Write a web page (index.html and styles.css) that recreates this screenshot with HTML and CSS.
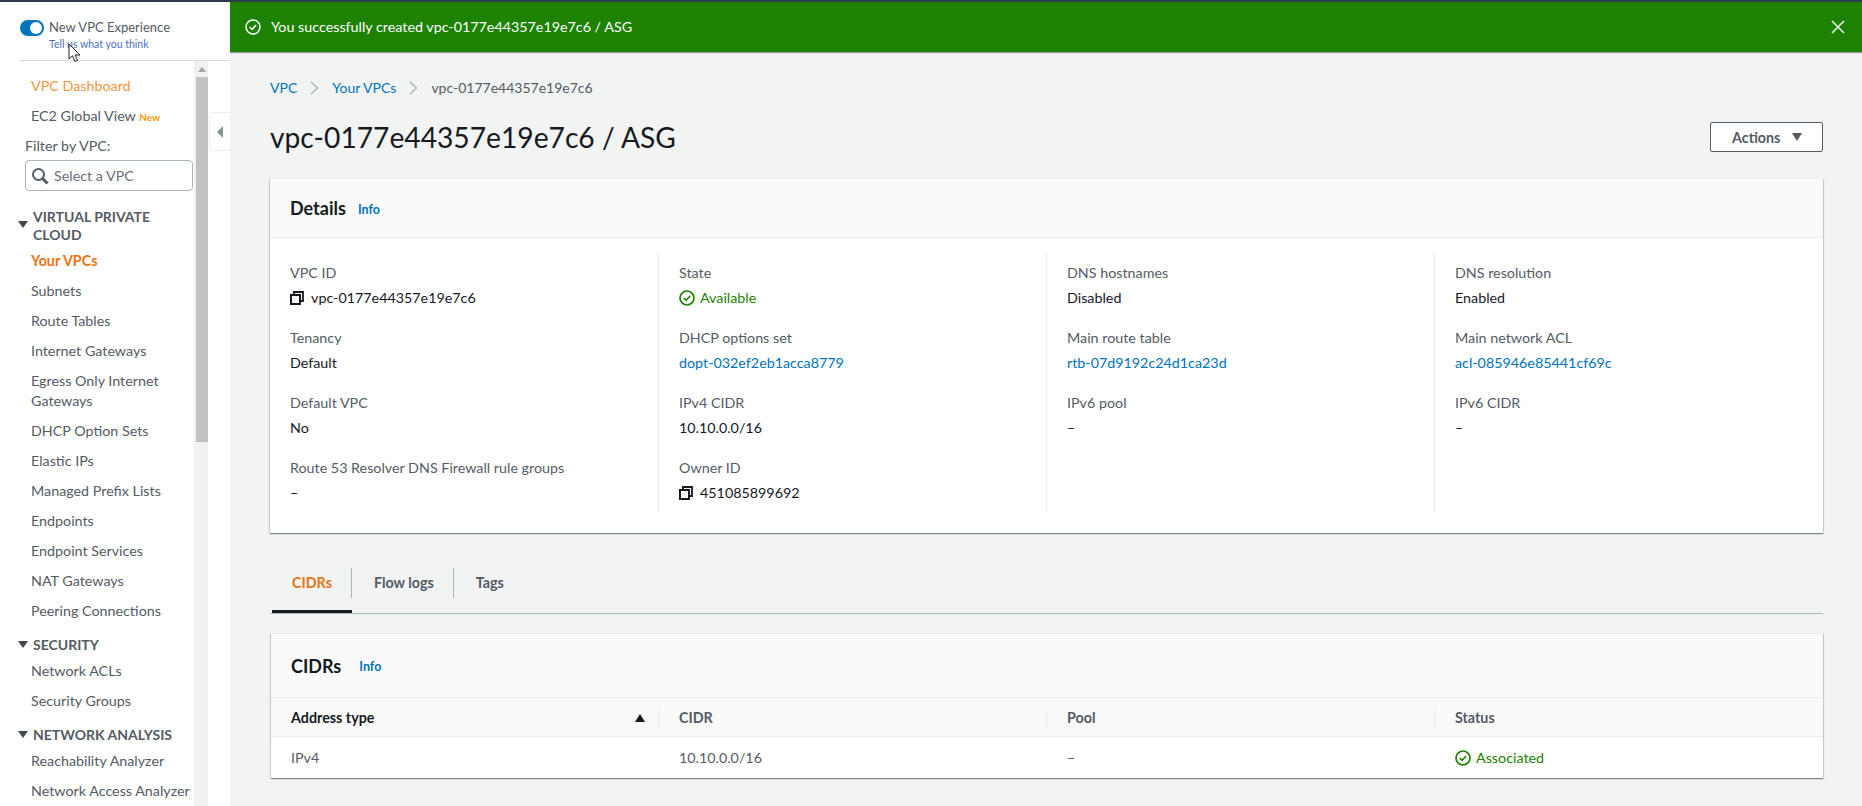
FILE: index.html
```html
<!DOCTYPE html>
<html lang="en">
<head>
  <meta charset="UTF-8">
  <title>VPC Console</title>
  <link rel="stylesheet" href="styles.css">
</head>
<body>

<svg class="cursor" width="14" height="20" viewBox="0 0 14 20">
  <path d="M1 1v15l3.5-3.2L7 18.5l2.6-1.1L7.2 12H12z" fill="#fff" stroke="#222" stroke-width="1"/>
</svg>

<div class="app">
  <!-- Barra lateral -->
  <aside class="sidebar">
    <div class="experience">
      <span class="toggle"></span>
      <div>
        <div class="experience-title">New VPC Experience</div>
        <a class="experience-link" href="#">Tell us what you think</a>
      </div>
    </div>

    <div class="side-body">
      <nav class="nav">
        <a class="nav-item hover" href="#">VPC Dashboard</a>
        <a class="nav-item" href="#">EC2 Global View <span class="new">New</span></a>
        <div class="filter-label">Filter by VPC:</div>
        <div class="filter">
          <svg width="18" height="18" viewBox="0 0 18 18">
            <circle cx="7.5" cy="7.5" r="5.5" fill="none" stroke="#545b64" stroke-width="2"/>
            <path d="M11.5 11.5l5 5" stroke="#545b64" stroke-width="3"/>
          </svg>
          <span>Select a VPC</span>
        </div>

        <div class="group group-first"><span class="caret"></span>VIRTUAL PRIVATE CLOUD</div>
        <a class="nav-item active" href="#">Your VPCs</a>
        <a class="nav-item" href="#">Subnets</a>
        <a class="nav-item" href="#">Route Tables</a>
        <a class="nav-item" href="#">Internet Gateways</a>
        <a class="nav-item" href="#">Egress Only Internet Gateways</a>
        <a class="nav-item" href="#">DHCP Option Sets</a>
        <a class="nav-item" href="#">Elastic IPs</a>
        <a class="nav-item" href="#">Managed Prefix Lists</a>
        <a class="nav-item" href="#">Endpoints</a>
        <a class="nav-item" href="#">Endpoint Services</a>
        <a class="nav-item" href="#">NAT Gateways</a>
        <a class="nav-item" href="#">Peering Connections</a>

        <div class="group"><span class="caret"></span>SECURITY</div>
        <a class="nav-item" href="#">Network ACLs</a>
        <a class="nav-item" href="#">Security Groups</a>

        <div class="group"><span class="caret"></span>NETWORK ANALYSIS</div>
        <a class="nav-item" href="#">Reachability Analyzer</a>
        <a class="nav-item" href="#">Network Access Analyzer</a>
      </nav>

      <div class="scrollbar">
        <div class="scroll-arrow"></div>
        <div class="scroll-thumb"></div>
      </div>

      <div class="gutter">
        <button class="collapse"><span></span></button>
      </div>
    </div>
  </aside>

  <div class="content">
    <!-- Aviso verde -->
    <div class="flash">
      <svg class="flash-icon" width="16" height="16" viewBox="0 0 16 16">
        <circle cx="8" cy="8" r="7" fill="none" stroke="#fff" stroke-width="1.5"/>
        <path d="M4.8 8l2.3 2.3 4-4.3" fill="none" stroke="#fff" stroke-width="1.5"/>
      </svg>
      <span class="flash-text">You successfully created vpc-0177e44357e19e7c6 / ASG</span>
      <svg width="14" height="14" viewBox="0 0 14 14">
        <path d="M1 1l12 12M13 1L1 13" stroke="#eaeded" stroke-width="1.6"/>
      </svg>
    </div>

    <main class="main">
      <div class="breadcrumb">
        <a href="#">VPC</a>
        <svg width="9" height="14" viewBox="0 0 9 14"><path d="M1 1l6.5 6L1 13" fill="none" stroke="#aab7b8" stroke-width="1.5"/></svg>
        <a href="#">Your VPCs</a>
        <svg width="9" height="14" viewBox="0 0 9 14"><path d="M1 1l6.5 6L1 13" fill="none" stroke="#aab7b8" stroke-width="1.5"/></svg>
        <span>vpc-0177e44357e19e7c6</span>
      </div>

      <div class="page-head">
        <h1>vpc-0177e44357e19e7c6 / ASG</h1>
        <button class="btn">Actions <span class="btn-caret"></span></button>
      </div>

      <section class="card card-details">
        <div class="card-head">
          <h2>Details</h2>
          <a class="info" href="#">Info</a>
        </div>
        <div class="details">
          <div class="col">
            <div class="field">
              <div class="label">VPC ID</div>
              <div class="value">
                <svg class="copy" width="14" height="14" viewBox="0 0 14 14"><path d="M4 3V1h9v9h-2" fill="none" stroke="#16191f" stroke-width="1.8"/><rect x="1" y="4" width="9" height="9" fill="none" stroke="#16191f" stroke-width="2"/></svg>
                vpc-0177e44357e19e7c6
              </div>
            </div>
            <div class="field">
              <div class="label">Tenancy</div>
              <div class="value">Default</div>
            </div>
            <div class="field">
              <div class="label">Default VPC</div>
              <div class="value">No</div>
            </div>
            <div class="field">
              <div class="label">Route 53 Resolver DNS Firewall rule groups</div>
              <div class="value">–</div>
            </div>
          </div>

          <div class="col">
            <div class="field">
              <div class="label">State</div>
              <div class="value status">
                <svg width="16" height="16" viewBox="0 0 16 16"><circle cx="8" cy="8" r="7" fill="none" stroke="#1d8102" stroke-width="1.7"/><path d="M4.8 8l2.3 2.3 4-4.3" fill="none" stroke="#1d8102" stroke-width="1.7"/></svg>
                Available
              </div>
            </div>
            <div class="field">
              <div class="label">DHCP options set</div>
              <div class="value"><a href="#">dopt-032ef2eb1acca8779</a></div>
            </div>
            <div class="field">
              <div class="label">IPv4 CIDR</div>
              <div class="value">10.10.0.0/16</div>
            </div>
            <div class="field">
              <div class="label">Owner ID</div>
              <div class="value">
                <svg class="copy" width="14" height="14" viewBox="0 0 14 14"><path d="M4 3V1h9v9h-2" fill="none" stroke="#16191f" stroke-width="1.8"/><rect x="1" y="4" width="9" height="9" fill="none" stroke="#16191f" stroke-width="2"/></svg>
                451085899692
              </div>
            </div>
          </div>

          <div class="col">
            <div class="field">
              <div class="label">DNS hostnames</div>
              <div class="value">Disabled</div>
            </div>
            <div class="field">
              <div class="label">Main route table</div>
              <div class="value"><a href="#">rtb-07d9192c24d1ca23d</a></div>
            </div>
            <div class="field">
              <div class="label">IPv6 pool</div>
              <div class="value">–</div>
            </div>
          </div>

          <div class="col">
            <div class="field">
              <div class="label">DNS resolution</div>
              <div class="value">Enabled</div>
            </div>
            <div class="field">
              <div class="label">Main network ACL</div>
              <div class="value"><a href="#">acl-085946e85441cf69c</a></div>
            </div>
            <div class="field">
              <div class="label">IPv6 CIDR</div>
              <div class="value">–</div>
            </div>
          </div>
        </div>
      </section>

      <div class="tabs">
        <a class="tab tab-active" href="#">CIDRs</a>
        <a class="tab" href="#">Flow logs</a>
        <a class="tab" href="#">Tags</a>
      </div>

      <section class="card card-table">
        <div class="card-head card-head-small">
          <h2>CIDRs</h2>
          <a class="info" href="#">Info</a>
        </div>
        <div class="row row-head">
          <div class="cell cell-sorted">Address type <span class="sort"></span></div>
          <div class="cell">CIDR</div>
          <div class="cell">Pool</div>
          <div class="cell">Status</div>
        </div>
        <div class="row">
          <div class="cell">IPv4</div>
          <div class="cell">10.10.0.0/16</div>
          <div class="cell">–</div>
          <div class="cell status">
            <svg width="16" height="16" viewBox="0 0 16 16"><circle cx="8" cy="8" r="7" fill="none" stroke="#1d8102" stroke-width="1.7"/><path d="M4.8 8l2.3 2.3 4-4.3" fill="none" stroke="#1d8102" stroke-width="1.7"/></svg>
            Associated
          </div>
        </div>
      </section>
    </main>
  </div>
</div>

</body>
</html>
```

FILE: styles.css
```css
* { box-sizing: border-box; margin: 0; padding: 0; }

html, body {
  height: 806px;
  overflow: hidden;
}

body {
  font-family: Lato, "Noto Sans", Arial, sans-serif;
  font-size: 14.3px;
  line-height: 20px;
  color: #16191f;
  background: #fff;
  border-top: 2px solid #2f3a4a;
}

a {
  color: #0073bb;
  text-decoration: none;
}

.cursor {
  position: absolute;
  left: 68px;
  top: 43px;
  z-index: 5;
}

.app {
  display: flex;
  height: 804px;
}

/* Barra lateral */
.sidebar {
  width: 230px;
  flex-shrink: 0;
  display: flex;
  flex-direction: column;
  background: #fff;
}

.experience {
  height: 59px;
  margin-left: 20px;
  padding-top: 15px;
  display: flex;
  gap: 5px;
  border-bottom: 1px solid #d5dbdb;
}

.toggle {
  width: 24px;
  height: 16px;
  border-radius: 8px;
  margin-top: 3px;
  background: #0073bb;
  display: flex;
  align-items: center;
  justify-content: flex-end;
  padding-right: 2px;
}

.toggle::after {
  content: "";
  width: 12px;
  height: 12px;
  border-radius: 50%;
  background: #fff;
}

.experience-title {
  font-size: 13px;
  line-height: 21px;
  color: #545b64;
}

.experience-link {
  display: block;
  font-size: 10.5px;
  line-height: 12px;
  color: #4a6fc0;
}

.side-body {
  flex: 1;
  display: flex;
  min-height: 0;
}

.nav {
  width: 194px;
  flex-shrink: 0;
  padding-top: 10px;
  overflow: hidden;
}

.nav-item {
  display: block;
  padding: 5px 0 5px 31px;
  color: #545b64;
}

.nav-item.hover { color: #f7963c; }

.nav-item.active {
  color: #ec7211;
  font-weight: 700;
}

.new {
  font-size: 10px;
  font-weight: 700;
  color: #ff9900;
}

.filter-label {
  padding: 4px 0 0 25px;
  color: #545b64;
}

.filter {
  height: 31px;
  margin: 4px 1px 0 25px;
  padding-left: 5px;
  display: flex;
  align-items: center;
  gap: 5px;
  border: 1px solid #aab7b8;
  border-radius: 4px;
  color: #687078;
}

.group {
  position: relative;
  padding: 10px 20px 2px 33px;
  line-height: 18px;
  font-size: 14px;
  font-weight: 700;
  color: #545b64;
}

.group-first { padding-top: 17px; }

.caret {
  position: absolute;
  left: 18px;
  bottom: 8px;
  border-left: 5px solid transparent;
  border-right: 5px solid transparent;
  border-top: 7px solid #414750;
}

.group-first .caret { bottom: 18px; }

.scrollbar {
  width: 14px;
  flex-shrink: 0;
  background: #f1f1f1;
  padding-left: 2px;
}

.scroll-arrow {
  width: 0;
  margin: 6px auto 5px;
  border-left: 4px solid transparent;
  border-right: 4px solid transparent;
  border-bottom: 5px solid #a3a3a3;
}

.scroll-thumb {
  height: 365px;
  background: #c1c1c1;
}

.gutter {
  flex: 1;
  padding-top: 51px;
  display: flex;
  justify-content: flex-end;
}

.collapse {
  width: 21px;
  height: 39px;
  display: flex;
  align-items: center;
  justify-content: center;
  background: #fff;
  border: 1px solid #eaeded;
  border-right: none;
  border-radius: 4px 0 0 4px;
}

.collapse span {
  border-top: 6px solid transparent;
  border-bottom: 6px solid transparent;
  border-right: 6px solid #879596;
}

/* Contenido */
.content {
  flex: 1;
  min-width: 0;
  display: flex;
  flex-direction: column;
  background: #f2f3f3;
}

.flash {
  height: 50px;
  padding: 0 17px 0 15px;
  display: flex;
  align-items: center;
  color: #fff;
  background: #1d8102;
  box-shadow: 0 1px 1px rgba(0, 28, 36, .4);
}

.flash-icon { margin-right: 10px; }

.flash-text { flex: 1; }

.main {
  padding: 26px 39px 0 40px;
}

.breadcrumb {
  height: 20px;
  display: flex;
  align-items: center;
  gap: 13px;
  font-size: 14px;
  color: #545b64;
}

.page-head {
  margin-top: 19px;
  height: 40px;
  display: flex;
  align-items: center;
  justify-content: space-between;
}

h1 {
  font-size: 28.2px;
  line-height: 36px;
  font-weight: 400;
}

.btn {
  width: 113px;
  height: 30px;
  display: flex;
  align-items: center;
  padding-left: 21px;
  gap: 12px;
  font-family: inherit;
  font-size: 14.3px;
  font-weight: 700;
  color: #545b64;
  background: #fff;
  border: 1px solid #545b64;
  border-radius: 2px;
}

.btn-caret {
  border-left: 5.5px solid transparent;
  border-right: 5.5px solid transparent;
  border-top: 8px solid #545b64;
}

.card {
  background: #fff;
  border-top: 1px solid #eaeded;
  box-shadow: 0 1px 1px 0 rgba(0, 28, 36, .3), 1px 1px 1px 0 rgba(0, 28, 36, .15), -1px 1px 1px 0 rgba(0, 28, 36, .15);
}

.card-details { margin-top: 21px; }

.card-head {
  height: 59px;
  padding-left: 20px;
  display: flex;
  align-items: center;
  gap: 12px;
  background: #fafafa;
  border-bottom: 1px solid #eaeded;
}

.card-head-small {
  height: 64px;
  gap: 18px;
}

h2 {
  font-size: 18px;
  line-height: 22px;
  font-weight: 700;
}

.info {
  font-size: 12.5px;
  font-weight: 700;
  margin-top: 2px;
}

.card-details .info { margin-top: 4px; }

.details {
  display: grid;
  grid-template-columns: repeat(4, 1fr);
  padding: 15px 0 20px 1px;
}

.col {
  padding: 0 0 10px 20px;
  border-right: 1px solid #eaeded;
}

.col:first-child { padding-left: 19px; }

.col:last-child { border-right: none; }

.field { margin-bottom: 20px; }

.field:last-child { margin-bottom: 0; }

.label {
  color: #545b64;
  margin-top: 10px;
  margin-bottom: 5px;
}

.value {
  display: flex;
  align-items: center;
  gap: 5px;
}

.copy { margin-right: 2px; }

.status { color: #1d8102; }

/* Pestañas */
.tabs {
  margin-top: 20px;
  display: flex;
  border-bottom: 1px solid #aab7b8;
}

.tab {
  height: 60px;
  padding: 20px 20px 0;
  font-weight: 700;
  color: #545b64;
  position: relative;
}

.tab + .tab { padding-left: 22px; }

.tab:not(:last-child)::after {
  content: "";
  position: absolute;
  right: 0;
  top: 15px;
  height: 30px;
  width: 1px;
  background: #aab7b8;
}

.tab-active {
  color: #ec7211;
  margin-left: 2px;
  box-shadow: inset 0 -3px 0 #16191f;
}

.card-table {
  margin: 19px 0 0 1px;
}

/* Tabla */
.row {
  display: grid;
  grid-template-columns: repeat(4, 1fr);
  height: 41px;
  align-items: center;
}

.row-head {
  height: 39px;
  padding-top: 2px;
  background: #fafafa;
  border-bottom: 1px solid #eaeded;
  font-weight: 700;
  color: #545b64;
}

.cell {
  padding-left: 20px;
  display: flex;
  align-items: center;
  gap: 5px;
  position: relative;
}

.row-head .cell:not(:last-child)::after {
  content: "";
  position: absolute;
  right: 0;
  top: 0;
  height: 20px;
  width: 1px;
  background: #eaeded;
}

.cell-sorted {
  color: #16191f;
  justify-content: space-between;
  padding-right: 14px;
}

.sort {
  border-left: 5px solid transparent;
  border-right: 5px solid transparent;
  border-bottom: 8px solid #16191f;
}

.row:not(.row-head) .cell:not(.status) { color: #545b64; }
```
